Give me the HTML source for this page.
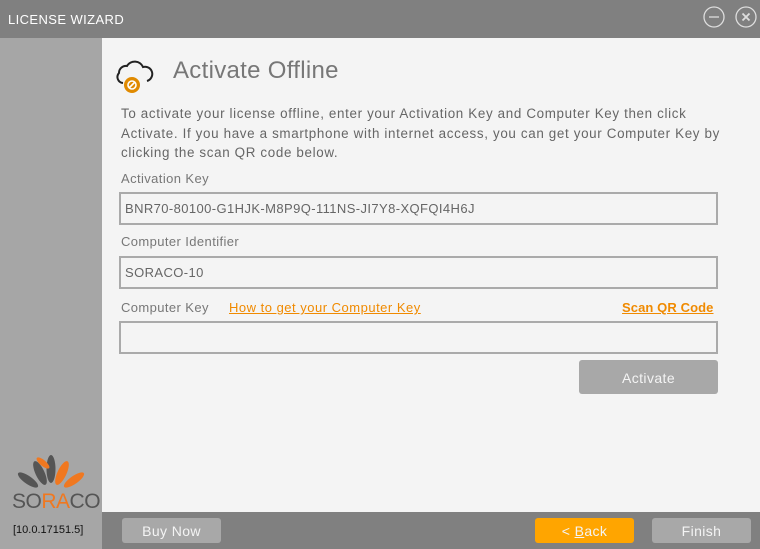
<!DOCTYPE html>
<html><head><style>
*{margin:0;padding:0;box-sizing:border-box}
body{width:760px;height:549px;position:relative;overflow:hidden;font-family:"Liberation Sans",sans-serif;background:#f4f4f4;color:#555;letter-spacing:0.4px}
.a{position:absolute}
.title{left:0;top:0;width:760px;height:38px;background:#808080;color:#fff;font-size:13px;line-height:40px;padding-left:8px}
.side{left:0;top:38px;width:102px;height:511px;background:#a6a6a6}
.bot{left:102px;top:512px;width:658px;height:37px;background:#808080}
.lbl{font-size:13px;color:#777}
.inp{left:119px;width:599px;height:33px;border:2px solid #aaa;font-size:13px;color:#666;padding-left:4px;line-height:29px}
.btn{border-radius:3px;color:#f4f4f4;font-size:14px;text-align:center}
</style></head><body>
<div class="a title">LICENSE WIZARD</div>
<svg class="a" style="left:703px;top:6px" width="22" height="22"><circle cx="11" cy="11" r="10" fill="none" stroke="#ddd" stroke-width="1.3"/><line x1="6" y1="11" x2="16" y2="11" stroke="#ddd" stroke-width="1.3"/></svg>
<svg class="a" style="left:735px;top:6px" width="22" height="22"><circle cx="11" cy="11" r="10" fill="none" stroke="#ddd" stroke-width="1.3"/><path d="M7.5 7.5L14.5 14.5M14.5 7.5L7.5 14.5" stroke="#ddd" stroke-width="1.8"/></svg>
<div class="a side"></div>
<div class="a bot"></div>
<svg class="a" style="left:114px;top:56px" width="40" height="38"><path d="M9 27 A6 6 0 0 1 5 17 A7 7 0 0 1 13 10 A9 9 0 0 1 29 11 A7 7 0 0 1 33 25" fill="none" stroke="#222" stroke-width="2"/><circle cx="18" cy="29" r="8" fill="#e08a00"/><circle cx="18" cy="29" r="4" fill="none" stroke="#fff" stroke-width="1.6"/><line x1="15" y1="32" x2="21" y2="26" stroke="#fff" stroke-width="1.6"/></svg>
<div class="a" style="left:173px;top:57px;font-size:24px;color:#777;letter-spacing:0.3px">Activate Offline</div>
<div class="a" style="left:121px;top:104px;width:610px;font-size:13.4px;line-height:19.5px;color:#666;letter-spacing:0.65px">To activate your license offline, enter your Activation Key and Computer Key then click Activate. If you have a smartphone with internet access, you can get your Computer Key by clicking the scan QR code below.</div>
<div class="a lbl" style="left:121px;top:171px">Activation Key</div>
<div class="a inp" style="top:192px">BNR70-80100-G1HJK-M8P9Q-111NS-JI7Y8-XQFQI4H6J</div>
<div class="a lbl" style="left:121px;top:234px">Computer Identifier</div>
<div class="a inp" style="top:256px">SORACO-10</div>
<div class="a lbl" style="left:121px;top:300px">Computer Key</div>
<div class="a" style="left:229px;top:300px;font-size:13px;color:#f08a00;text-decoration:underline;letter-spacing:0.5px">How to get your Computer Key</div>
<div class="a" style="left:622px;top:300px;font-size:13px;color:#f08a00;font-weight:bold;text-decoration:underline;letter-spacing:0.1px">Scan QR Code</div>
<div class="a inp" style="top:321px"></div>
<div class="a btn" style="left:579px;top:360px;width:139px;height:34px;background:#a8a8a8;line-height:36px">Activate</div>
<svg class="a" style="left:16px;top:454px" width="70" height="36">
<g fill="#555"><ellipse cx="35" cy="15" rx="4.5" ry="14"/><ellipse cx="24" cy="19" rx="4.5" ry="13" transform="rotate(-25 24 19)"/><ellipse cx="12" cy="26" rx="4" ry="12" transform="rotate(-55 12 26)"/></g>
<g fill="#f07820"><ellipse cx="46" cy="19" rx="4.5" ry="13" transform="rotate(25 46 19)"/><ellipse cx="58" cy="26" rx="4" ry="12" transform="rotate(55 58 26)"/><ellipse cx="27" cy="9" rx="3" ry="8" transform="rotate(-50 27 9)"/></g></svg>
<div class="a" style="left:12px;top:490px;font-size:21px;color:#555;letter-spacing:-0.5px">SO<span style="color:#f07820">RA</span>CO</div>
<div class="a" style="left:13px;top:524px;font-size:11px;color:#111;letter-spacing:0">[10.0.17151.5]</div>
<div class="a btn" style="left:122px;top:518px;width:99px;height:25px;background:#a8a8a8;line-height:27px">Buy Now</div>
<div class="a btn" style="left:535px;top:518px;width:99px;height:25px;background:#ffa500;line-height:27px">&lt; <u>B</u>ack</div>
<div class="a btn" style="left:652px;top:518px;width:99px;height:25px;background:#a8a8a8;line-height:27px">Finish</div>
</body></html>
